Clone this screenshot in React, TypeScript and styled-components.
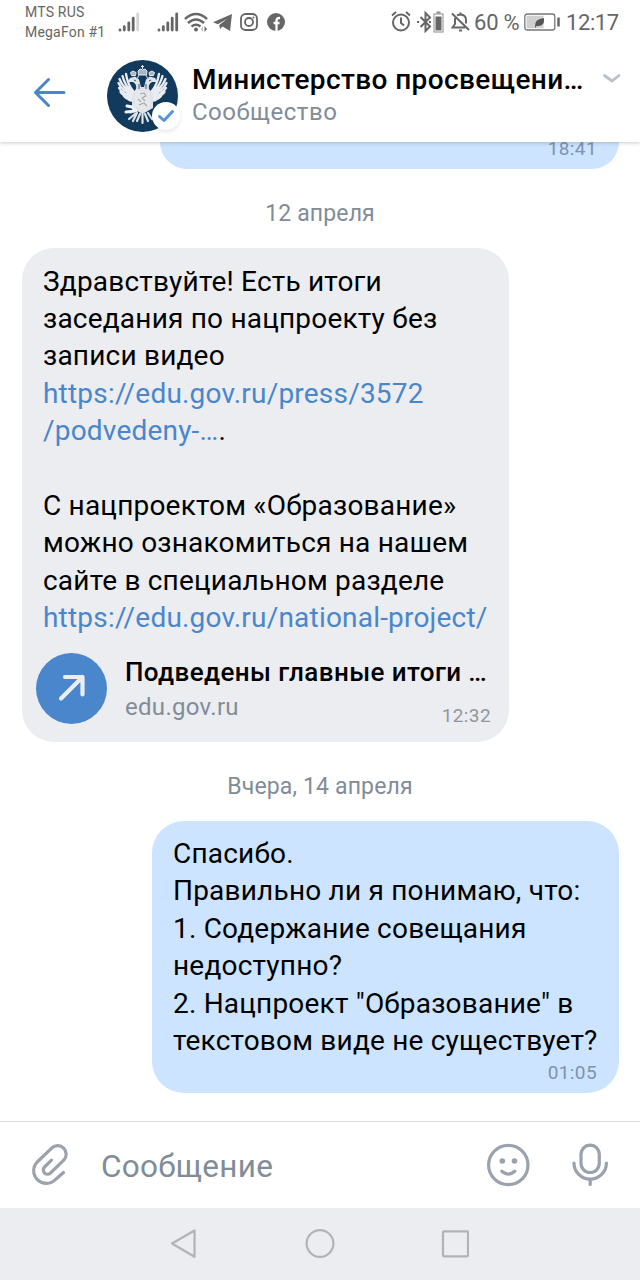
import styled, { createGlobalStyle } from 'styled-components';

const GlobalStyle = createGlobalStyle`
  * {
    box-sizing: border-box;
  }

  body {
    margin: 0;
    background: #ffffff;
    font-family: Roboto, "Noto Sans", sans-serif;
  }
`;

const Screen = styled.div`
  display: flex;
  flex-direction: column;
  width: 640px;
  height: 1280px;
  overflow: hidden;
  background: #ffffff;
`;

const StatusBar = styled.div`
  display: flex;
  align-items: center;
  flex: none;
  height: 44px;
  padding: 0 21px 1px 25px;
  color: #666666;
`;

const Carriers = styled.div`
  width: 93px;
  padding-top: 1px;
  font-size: 14px;
  line-height: 20px;
  letter-spacing: 0.2px;
  white-space: nowrap;
`;

const StatusSvg = styled.svg<{ $gap?: number }>`
  flex: none;
  margin-right: ${props => props.$gap ?? 0}px;
`;

const StatusText = styled.span<{ $width: number; $spacing?: number }>`
  width: ${props => props.$width}px;
  padding-top: 1px;
  font-size: 22px;
  letter-spacing: ${props => props.$spacing ?? 0}px;
  white-space: nowrap;
`;

const Spacer = styled.div`
  flex: 1;
`;

const Header = styled.header`
  position: relative;
  z-index: 1;
  display: flex;
  flex: none;
  height: 98px;
  padding: 0 19px 0 33px;
  background: #ffffff;
  box-shadow: 0 1px 4px rgba(0, 0, 0, 0.2);
  clip-path: inset(0 0 -8px 0);
`;

const BackButton = styled.button`
  display: flex;
  width: 74px;
  padding: 33px 0 0;
  border: 0;
  background: none;
`;

const Avatar = styled.div`
  position: relative;
  width: 72px;
  height: 72px;
  margin: 16px 13px 0 0;
`;

const Verified = styled.div`
  position: absolute;
  right: -1px;
  bottom: 2px;
  display: flex;
  align-items: center;
  justify-content: center;
  width: 28px;
  height: 28px;
  border-radius: 50%;
  background: #ffffff;
  box-shadow: 0 2px 4px rgba(0, 0, 0, 0.1);
`;

const Heading = styled.div`
  flex: 1;
  padding-top: 19px;
  white-space: nowrap;
`;

const Title = styled.div`
  font-size: 28px;
  font-weight: 500;
  line-height: 33px;
  letter-spacing: 0.4px;
  color: #000000;
`;

const Subtitle = styled.div`
  font-size: 24px;
  line-height: 33px;
  letter-spacing: 0.5px;
  color: #818c99;
`;

const Chat = styled.main`
  display: flex;
  flex-direction: column;
  flex: none;
  height: 979px;
  overflow: hidden;
`;

const Bubble = styled.div<{ $own?: boolean; $width: number; $height: number }>`
  flex: none;
  align-self: ${props => props.$own ? 'flex-end' : 'flex-start'};
  width: ${props => props.$width}px;
  height: ${props => props.$height}px;
  margin: ${props => props.$own ? '0 21px 0 0' : '0 0 0 22px'};
  padding: ${props => props.$own ? '14px' : '14.5px'} 0 0 21px;
  border-radius: 32px;
  background: ${props => props.$own ? '#cce4ff' : '#ebedf0'};
`;

const PreviousBubble = styled(Bubble)`
  display: flex;
  align-items: flex-end;
  justify-content: flex-end;
  padding: 0 22px 7px 0;
  border-radius: 0 0 32px 32px;
`;

const Text = styled.p`
  margin: 0;
  font-size: 28px;
  line-height: 37.4px;
  letter-spacing: 0.2px;
  white-space: pre;
  color: #000000;
`;

const Link = styled.a`
  color: #4986cc;
`;

const Time = styled.div<{ $own?: boolean }>`
  font-size: 19px;
  line-height: 26px;
  letter-spacing: 0.4px;
  text-align: right;
  color: ${props => props.$own ? '#7d93b2' : '#8f969f'};
`;

const OwnTime = styled(Time)`
  padding: 1px 22px 0 0;
`;

const LinkTime = styled(Time)`
  padding-top: 14px;
`;

const DateLabel = styled.div`
  display: flex;
  flex: none;
  align-items: center;
  justify-content: center;
  height: 79px;
  padding-top: 9px;
  font-size: 23px;
  letter-spacing: 0.15px;
  color: #818c99;
`;

const Attachment = styled.div`
  display: flex;
  margin: 16px 0 0 -7px;
`;

const LinkIcon = styled.div`
  display: flex;
  align-items: center;
  justify-content: center;
  width: 71px;
  height: 71px;
  margin-right: 18px;
  border-radius: 50%;
  background: #4986cc;
`;

const LinkInfo = styled.div`
  width: 366px;
  padding-top: 2px;
`;

const LinkTitle = styled.div`
  font-size: 26px;
  font-weight: 500;
  line-height: 34px;
  letter-spacing: 0.4px;
  white-space: nowrap;
  color: #000000;
`;

const LinkFooter = styled.div`
  display: flex;
  justify-content: space-between;
`;

const Domain = styled.div`
  font-size: 24px;
  line-height: 36px;
  letter-spacing: 0.3px;
  color: #818c99;
`;

const Composer = styled.footer`
  display: flex;
  align-items: center;
  flex: none;
  height: 87px;
  padding: 0 31px 0 31px;
  border-top: 1px solid #dcdee0;
`;

const Placeholder = styled.div`
  flex: 1;
  padding: 2px 0 0 32px;
  font-size: 31.5px;
  letter-spacing: 0.3px;
  color: #818c99;
`;

const ComposerSvg = styled.svg<{ $gap?: number }>`
  flex: none;
  margin-right: ${props => props.$gap ?? 0}px;
`;

const NavBar = styled.nav`
  display: flex;
  align-items: center;
  justify-content: center;
  gap: 106px;
  flex: none;
  height: 72px;
  background: #ebedf0;
`;

const Signal = ({ gap, weak }: { gap: number; weak?: boolean }) => (
  <StatusSvg $gap={gap} width="22" height="20" viewBox="0 0 22 20" strokeWidth="2.8" strokeLinecap="round">
    <path d="M2 18V18.2M6.3 14.6V18M10.8 10.8V18M15.2 6.2V18" stroke="#666666" />
    <path d="M19.7 2V18" stroke={weak ? '#d4d4d4' : '#666666'} />
  </StatusSvg>
);

const wing = 'M27 32Q21 26 19 14M26 33Q18 26 15.500 16M26 34Q16 28 12.500 19M26 35Q15 31 11.500 23M26 36Q16 35 12 28M27 37Q18 38 13.500 32M28 38Q21 41 17 36M29 39Q24 42 21 39';

const Emblem = () => (
  <svg width="71" height="72" viewBox="0 0 71 72">
    <ellipse cx="35.5" cy="36" rx="35.5" ry="36" fill="#113a5c" />
    <g stroke="#e9edf1" strokeWidth="2.300" strokeLinecap="round" fill="none">
      <path d={wing} />
      <path d={wing} transform="translate(71 0) scale(-1 1)" />
    </g>
    {/* heads, necks and body */}
    <path d="M29 29Q30 24 26 22L20.500 22L23 18L28 16.500L32 19.500L34 27H37L39 19.500L43 16.500L48 18L50.500 22L45 22Q41 24 42 29L46 34V48L35.500 54L25 48V34Z" fill="#dfe4e9" />
    <path d="M27 20L29 21M44 20L42 21M32 24V29M39 24V29" stroke="#3a5872" strokeWidth="1" />
    {/* crowns */}
    <path d="M35.500 5V9M34 6.500H37M31.500 15L31 11L33 9L35.500 10L38 9L40 11L39.500 15ZM24.500 15.500L23.500 12.500L26 11L29 12.500L28.500 15.500ZM42.500 15.500L42 12.500L45 11L47.500 12.500L46.500 15.500Z" fill="#a9b5c1" stroke="#e4e9ee" strokeWidth="1" />
    <path d="M32 15L30 19M39 15L41 19" stroke="#b4c0cb" strokeWidth="1.200" />
    {/* shield */}
    <path d="M28 31H43V46L35.500 50L28 46Z" fill="#e7e8e9" />
    <path d="M33 34L37 33L39 36L35 38L38 41M31 39L34 42M32 45L37 43L40 46" stroke="#a7abb0" strokeWidth="1.200" fill="none" />
    {/* claws, orb and tail */}
    <path d="M20 46L25 47L28 50L24 52M19 52L29 51" stroke="#f0f2f4" strokeWidth="3" strokeLinecap="round" fill="none" />
    <path d="M22 59L28 54M26 61L30 53M30 61L33 54M35.500 63V54M41 61L38 54M45 59L41 53" stroke="#dde3e8" strokeWidth="2.200" strokeLinecap="round" />
  </svg>
);

const App = () => (
  <>
    <GlobalStyle />
    <Screen>
      <StatusBar>
        <Carriers>
          <div>MTS RUS</div>
          <div>MegaFon #1</div>
        </Carriers>
        <Signal gap={17} weak />
        <Signal gap={5} />
        <StatusSvg $gap={5} width="24" height="20" viewBox="0 0 24 20" fill="none" stroke="#666666" strokeWidth="2.4">
          <path d="M1 7Q12 -3 23 7M4 11Q12 4 20 11M7.500 14.500Q12 11 16.500 14.500" />
          <circle cx="12" cy="17.500" r="2" fill="#666666" stroke="none" />
          <path d="M19 14L16.500 17L19 20Z" fill="#c4c4c4" stroke="none" />
          <path d="M20.500 14L23 17L20.500 20Z" fill="#666666" stroke="none" />
        </StatusSvg>
        <StatusSvg $gap={8} width="19" height="18" viewBox="0 0 19 18" fill="#666666">
          <path d="M0 9.300L19 1L17 18L9.500 13.500L7 16L6.300 12.300L14.500 5.500L5 11.300Z" />
          <path d="M6.500 12L15 5.500L9 13.500Z" />
        </StatusSvg>
        <StatusSvg $gap={9} width="18" height="18" viewBox="0 0 18 18" fill="none" stroke="#666666" strokeWidth="1.8">
          <rect x="1" y="1" width="16" height="16" rx="4.500" />
          <circle cx="9" cy="9" r="4" />
          <circle cx="13.500" cy="4.500" r="1" fill="#666666" stroke="none" />
        </StatusSvg>
        <StatusSvg width="18" height="18" viewBox="0 0 18 18">
          <circle cx="9" cy="9" r="9" fill="#666666" />
          <path d="M9.500 18V7.500Q9.500 4.800 13 5M6.500 10H12.500" stroke="#ffffff" strokeWidth="2.3" fill="none" />
        </StatusSvg>
        <Spacer />
        <StatusSvg $gap={6} width="20" height="21" viewBox="0 0 20 21" fill="none" stroke="#666666" strokeWidth="2">
          <circle cx="10" cy="11.500" r="8" />
          <path d="M10 6.500V12L13 14.500M1 4.500L5 1M19 4.500L15 1" />
        </StatusSvg>
        <StatusSvg $gap={7} width="27" height="22" viewBox="0 0 27 22" fill="none" stroke="#666666" strokeWidth="2">
          <path d="M3.500 6L13 15.500L8.500 20V2L13 6.500L3.500 16" />
          <path d="M0 11H2M12 11H14" />
          <rect x="17" y="3" width="9" height="18" strokeWidth="1" stroke="#8c8c8c" />
          <path d="M19.500 1.500H23.500" stroke="#8c8c8c" />
          <rect x="18.500" y="5.500" width="6" height="14" fill="#666666" stroke="none" />
        </StatusSvg>
        <StatusSvg $gap={4} width="19" height="20" viewBox="0 0 19 20" fill="none" stroke="#666666" strokeWidth="2">
          <path d="M1 1.500L18 18M4 6V12L1.500 15.500H14M6 3.500Q7.500 2.500 9.500 2.500Q15 3 15 8V11.500M9.500 0.500V2.500M8 18.500H11" />
        </StatusSvg>
        <StatusText $width={50} $spacing={-0.2}>60 %</StatusText>
        <StatusSvg $gap={6} width="36" height="18" viewBox="0 0 36 18">
          <rect x="0.800" y="1" width="30" height="16" rx="2.500" fill="#ffffff" stroke="#777777" strokeWidth="1.300" />
          <rect x="2.500" y="2.700" width="17" height="12.600" fill="#d0d0d0" />
          <path d="M11 14Q10 6 20 5Q21 14 12.500 13L11 15Z" fill="#555555" />
          <path d="M34.500 4.500V13.500" stroke="#666666" strokeWidth="2.500" />
        </StatusSvg>
        <StatusText $width={53} $spacing={-0.4}>12:17</StatusText>
      </StatusBar>

      <Header>
        <BackButton>
          <svg width="33" height="31" viewBox="0 0 33 31" fill="none" stroke="#4986cc" strokeWidth="3" strokeLinecap="round" strokeLinejoin="round">
            <path d="M31 15.500H2.500M15.500 2.500L2.500 15.500L15.500 28.500" />
          </svg>
        </BackButton>
        <Avatar>
          <Emblem />
          <Verified>
            <svg width="17" height="14" viewBox="0 0 17 14" fill="none" stroke="#5794e0" strokeWidth="3" strokeLinecap="round" strokeLinejoin="round">
              <path d="M1.500 7.500L6 11.500L14.500 2.500" />
            </svg>
          </Verified>
        </Avatar>
        <Heading>
          <Title>Министерство просвещени…</Title>
          <Subtitle>Сообщество</Subtitle>
        </Heading>
        <svg width="19" height="68" viewBox="0 0 19 68" fill="none" stroke="#b8c1cc" strokeWidth="2.800" strokeLinecap="round" strokeLinejoin="round">
          <path d="M2.500 31.500L10 37L17 31.500" />
        </svg>
      </Header>

      <Chat>
        <PreviousBubble $own $width={459} $height={27}>
          <Time $own>18:41</Time>
        </PreviousBubble>
        <DateLabel>12 апреля</DateLabel>
        <Bubble $width={487} $height={494}>
          <Text>
            {'Здравствуйте! Есть итоги\nзаседания по нацпроекту без\nзаписи видео\n'}
            <Link>https://edu.gov.ru/press/3572</Link>
            {'\n'}
            <Link>/podvedeny-…</Link>
            {'.\n\nС нацпроектом «Образование»\nможно ознакомиться на нашем\nсайте в специальном разделе\n'}
            <Link>https://edu.gov.ru/national-project/</Link>
          </Text>
          <Attachment>
            <LinkIcon>
              <svg width="28" height="28" viewBox="0 0 28 28" fill="none" stroke="#ebedf0" strokeWidth="4.200" strokeLinecap="round" strokeLinejoin="round">
                <path d="M3 24.500L24.500 3M7 3H24.500V20.500" />
              </svg>
            </LinkIcon>
            <LinkInfo>
              <LinkTitle>Подведены главные итоги …</LinkTitle>
              <LinkFooter>
                <Domain>edu.gov.ru</Domain>
                <LinkTime>12:32</LinkTime>
              </LinkFooter>
            </LinkInfo>
          </Attachment>
        </Bubble>
        <DateLabel>Вчера, 14 апреля</DateLabel>
        <Bubble $own $width={467} $height={272}>
          <Text>
            {'Спасибо.\nПравильно ли я понимаю, что:\n1. Содержание совещания\nнедоступно?\n2. Нацпроект "Образование" в\nтекстовом виде не существует?'}
          </Text>
          <OwnTime $own>01:05</OwnTime>
        </Bubble>
      </Chat>

      <Composer>
        <ComposerSvg width="38" height="44" viewBox="0 0 38 44" fill="none" stroke="#99a2ad" strokeWidth="3.200" strokeLinecap="round" strokeLinejoin="round">
          <path d="M32.500 29.500L24.500 36.500A12.600 12.600 0 0 1 6.200 19L21 4.800A8.500 8.500 0 0 1 33 16.800L19.500 30A4.200 4.200 0 0 1 13.500 24L20.500 17.200" />
        </ComposerSvg>
        <Placeholder>Сообщение</Placeholder>
        <ComposerSvg $gap={41} width="44" height="44" viewBox="0 0 44 44" fill="none" stroke="#99a2ad" strokeWidth="3.200" strokeLinecap="round">
          <circle cx="22.300" cy="22" r="19.700" />
          <circle cx="16.300" cy="18" r="2.800" fill="#99a2ad" stroke="none" />
          <circle cx="28.500" cy="18" r="2.800" fill="#99a2ad" stroke="none" />
          <path d="M15.800 28.300Q22.300 34 28.800 28.300" />
        </ComposerSvg>
        <ComposerSvg width="38" height="44" viewBox="0 0 38 44" fill="none" stroke="#99a2ad" strokeWidth="3.200" strokeLinecap="round">
          <rect x="10" y="2.200" width="18.300" height="27.300" rx="9.150" />
          <path d="M3 20A16.200 16.200 0 0 0 35.400 20M19.200 36.500V41.500" />
        </ComposerSvg>
      </Composer>

      <NavBar>
        <svg width="28" height="32" viewBox="0 0 28 32" fill="none" stroke="#b1b3b6" strokeWidth="2.200" strokeLinejoin="round">
          <path d="M1 15.500L23.500 2.500V28.800Z" />
        </svg>
        <svg width="30" height="30" viewBox="0 0 30 30" fill="none" stroke="#b1b3b6" strokeWidth="2.200">
          <circle cx="15" cy="14.500" r="13.400" />
        </svg>
        <svg width="28" height="28" viewBox="0 0 28 28" fill="none" stroke="#b1b3b6" strokeWidth="2.200">
          <rect x="2" y="1.300" width="25" height="25" rx="1" />
        </svg>
      </NavBar>
    </Screen>
  </>
);

export default App;
